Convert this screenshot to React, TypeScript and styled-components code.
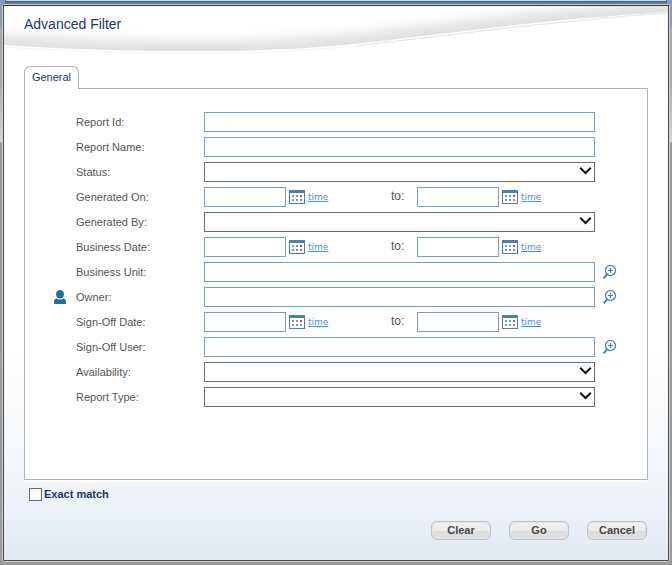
import React from "react";
import styled, { createGlobalStyle } from "styled-components";

const GlobalStyle = createGlobalStyle`
  *, *::before, *::after { box-sizing: border-box; }
  html, body, #root { height: 100%; }
  body {
    margin: 0;
    font-family: "Liberation Sans", Arial, sans-serif;
    font-size: 11px;
    color: #555;
  }
  input, select, button { font: inherit; }
`;

const Backdrop = styled.div`
  min-height: 100%;
  display: flex;
  flex-direction: column;
  padding: 0 2px 3px;
  background:
    linear-gradient(#647a8f, #647a8f) 5px 0 / calc(100% - 10px) 4px no-repeat,
    linear-gradient(#8c9bae 0, #8c9bae 22px, #aaa 30px, #a5a5aa 75px, #d5d5d5 142px, #9c9a99 143px, #9c9a99 100%);
`;

const UnderlyingBar = styled.div`
  height: 2px;
  margin: 0 3px 2px;
  background: #cfdada;
  border: solid #4f6370;
  border-width: 0 1px 1px;
`;

const Dialog = styled.main`
  flex: 1;
  display: flex;
  flex-direction: column;
  border: 1px solid #c9cdd0;
  border-radius: 2px;
`;

const DialogBody = styled.div`
  position: relative;
  flex: 1;
  display: flex;
  flex-direction: column;
  padding: 0 20px 20px;
  border: 1px solid #4b4b50;
  border-top-color: #2d3444;
  background: linear-gradient(#fff 0, #fff 340px, #f2f6fa 470px, #e9eef6 520px, #e2e9f1 100%);
`;

const Swoosh = styled.svg`
  position: absolute;
  top: 0;
  left: 0;
  width: 100%;
  height: 50px;
`;

const Title = styled.h1`
  position: relative;
  margin: 0;
  padding-top: 9px;
  height: 60px;
  font-size: 14px;
  line-height: 18px;
  font-weight: 400;
  color: #1b3768;
`;

const Tab = styled.button`
  position: relative;
  align-self: flex-start;
  width: 55px;
  height: 23px;
  margin-bottom: -1px;
  padding: 0 0 2px;
  border: 1px solid #b1b1b1;
  border-bottom: 0;
  border-radius: 6px 6px 0 0;
  background: #fff;
  color: #1b3768;
  line-height: 20px;
  text-align: center;
`;

const Panel = styled.form`
  flex: 1;
  display: flex;
  flex-direction: column;
  gap: 5px;
  padding: 23px 0;
  border: 1px solid #b1b1b1;
  background: #fff;
  box-shadow: 0 2px #fff;
`;

const Row = styled.div`
  display: grid;
  grid-template-columns: 51px 128px minmax(0, 1fr) 52px;
  align-items: center;
  height: 20px;
`;

const Marker = styled.span`
  display: flex;
  justify-content: flex-end;
  padding-right: 10px;
`;

const Label = styled.label`
  line-height: 20px;
`;

const TextField = styled.input<{ $short?: boolean }>`
  width: ${(p) => (p.$short ? "82px" : "100%")};
  height: 20px;
  padding: 0 4px;
  border: 1px solid #7d9dbb;
  border-radius: 0;
  background: #fff;
  outline: none;
`;

const SelectWrap = styled.span`
  position: relative;
  display: block;
  height: 20px;
`;

const Select = styled.select`
  appearance: none;
  display: block;
  width: 100%;
  height: 20px;
  padding: 0 20px 0 4px;
  border: 1px solid #6d6d6d;
  border-radius: 0;
  background: #fff;
  outline: none;
`;

const Chevron = styled.svg`
  position: absolute;
  top: 4px;
  right: 3px;
  pointer-events: none;
`;

const DateRange = styled.div`
  display: grid;
  grid-template-columns: 187px 26px auto;
  justify-content: start;
  height: 20px;
`;

const DateGroup = styled.span`
  display: flex;
  align-items: center;
`;

const To = styled.span`
  font-size: 12px;
  line-height: 18px;
`;

const IconButton = styled.button`
  display: flex;
  margin: 0;
  padding: 0;
  border: 0;
  background: none;
`;

const CalendarButton = styled(IconButton)`
  padding: 0 3px;
`;

const LookupButton = styled(IconButton)`
  margin-left: 8px;
`;

const TimeLink = styled.a`
  font-family: "DejaVu Sans", Verdana, sans-serif;
  font-size: 9px;
  line-height: 12px;
  color: #4b91e6;
`;

const ExactMatch = styled.label`
  display: flex;
  align-items: center;
  gap: 2px;
  height: 14px;
  margin: 7px 0 0 5px;
  font-weight: 700;
  color: #1b3768;
`;

const Checkbox = styled.input`
  appearance: none;
  width: 13px;
  height: 13px;
  margin: 0;
  border: 1px solid #6d6d6d;
  background: #fff;
  &:checked { box-shadow: inset 0 0 0 3px #fff; background: #1b3768; }
`;

const Actions = styled.div`
  display: flex;
  justify-content: flex-end;
  gap: 18px;
  margin: 20px 1px 0 0;
`;

const ActionButton = styled.button`
  width: 60px;
  height: 19px;
  padding: 0;
  border: 1px solid #bfbfbf;
  border-radius: 6px;
  background: linear-gradient(#f1f1f1 0, #ececec 9px, #dedede 9px, #e2e2e2 100%);
  box-shadow: inset 0 0 0 1px #e3e3e3;
  font-weight: 700;
  line-height: 17px;
  color: #484848;
`;

const CalendarIcon = () => (
  <svg width="16" height="14" viewBox="0 0 16 14" shapeRendering="crispEdges" aria-hidden="true">
    <rect width="16" height="14" fill="#4b81a8" />
    <rect x="1" y="3" width="14" height="10" fill="#fff" />
    <path d="M3 5h2v2H3zM7 5h2v2H7zM3 9h2v2H3zM7 9h2v2H7zM11 9h2v2h-2z" fill="#6f9cba" />
    <path d="M11 5h2v2h-2z" fill="#f23a3a" />
  </svg>
);

const LookupIcon = () => (
  <svg width="14" height="14" viewBox="0 0 14 14" fill="none" stroke="#4581a9" aria-hidden="true">
    <circle cx="7.5" cy="5.5" r="5" strokeWidth="1.2" />
    <path d="M7.5 3v5M5 5.5h5" strokeWidth="1.2" />
    <path d="M4 9.5L.6 13.3" strokeWidth="1.9" />
  </svg>
);

const UserIcon = () => (
  <svg width="12" height="14" viewBox="0 0 12 14" fill="#226d98" aria-label="Current user">
    <ellipse cx="6" cy="4.3" rx="4" ry="4.3" />
    <path d="M2.2 8.6C4.4 9.8 7.6 9.8 9.8 8.6 11.4 9.2 12 10.6 12 12.3V13q0 1-1 1H1q-1 0-1-1v-.7C0 10.6.6 9.2 2.2 8.6Z" />
  </svg>
);

const foldEdge = "M-20 38L0 39C60 43 120 45 190 45C250 45 300 43 350 38C420 30 490 21 540 16C590 11 630 8 664 6L684 5";

const HeaderFold = () => (
  <Swoosh viewBox="0 0 664 50" preserveAspectRatio="none" aria-hidden="true">
    <defs>
      <clipPath id="above-fold">
        <path d={`${foldEdge}V-20H-20Z`} />
      </clipPath>
      <filter id="soften" filterUnits="userSpaceOnUse" x="-20" y="-20" width="704" height="100">
        <feGaussianBlur stdDeviation="6" />
      </filter>
    </defs>
    <g clipPath="url(#above-fold)">
      <path d={foldEdge} fill="none" stroke="#dfdfdf" strokeWidth="20" filter="url(#soften)" />
    </g>
    <path d="M0 41C60 45 120 47 190 47C250 47 300 45 350 40C420 32 490 23 540 18C590 13 630 9 664 7" fill="none" stroke="#f5f5f5" />
    <path d="M350 40C420 32 490 23 540 18C590 13 630 9 664 7" fill="none" stroke="#e6e6e6" />
  </Swoosh>
);

type Kind = "text" | "select" | "date" | "lookup";

const fields: { label: string; kind: Kind; owner?: boolean }[] = [
  { label: "Report Id", kind: "text" },
  { label: "Report Name", kind: "text" },
  { label: "Status", kind: "select" },
  { label: "Generated On", kind: "date" },
  { label: "Generated By", kind: "select" },
  { label: "Business Date", kind: "date" },
  { label: "Business Unit", kind: "lookup" },
  { label: "Owner", kind: "lookup", owner: true },
  { label: "Sign-Off Date", kind: "date" },
  { label: "Sign-Off User", kind: "lookup" },
  { label: "Availability", kind: "select" },
  { label: "Report Type", kind: "select" },
];

function DatePart({ id, name }: { id: string; name: string }) {
  return (
    <DateGroup>
      <TextField $short id={id} aria-label={name} />
      <CalendarButton type="button" aria-label={`Pick ${name}`}>
        <CalendarIcon />
      </CalendarButton>
      <TimeLink href="#time">time</TimeLink>
    </DateGroup>
  );
}

function Control({ id, label, kind }: { id: string; label: string; kind: Kind }) {
  if (kind === "select") {
    return (
      <SelectWrap>
        <Select id={id} defaultValue="">
          <option value="" />
        </Select>
        <Chevron width="13" height="10" viewBox="0 0 13 10" aria-hidden="true">
          <path d="M1.2 1.8L6.5 7L11.8 1.8" fill="none" stroke="#171717" strokeWidth="2" />
        </Chevron>
      </SelectWrap>
    );
  }
  if (kind === "date") {
    return (
      <DateRange>
        <DatePart id={id} name={`${label} from`} />
        <To>to:</To>
        <DatePart id={`${id}-to`} name={`${label} to`} />
      </DateRange>
    );
  }
  return <TextField id={id} />;
}

export default function App() {
  return (
    <Backdrop>
      <GlobalStyle />
      <UnderlyingBar />
      <Dialog>
        <DialogBody>
          <HeaderFold />
          <Title>Advanced Filter</Title>
          <Tab type="button">General</Tab>
          <Panel id="filter">
            {fields.map(({ label, kind, owner }) => {
              const id = label.toLowerCase().replace(/ /g, "-");
              return (
                <Row key={id}>
                  <Marker>{owner && <UserIcon />}</Marker>
                  <Label htmlFor={id}>{label}:</Label>
                  <Control id={id} label={label} kind={kind} />
                  {kind === "lookup" && (
                    <LookupButton type="button" aria-label={`Look up ${label}`}>
                      <LookupIcon />
                    </LookupButton>
                  )}
                </Row>
              );
            })}
          </Panel>
          <ExactMatch>
            <Checkbox type="checkbox" />
            Exact match
          </ExactMatch>
          <Actions>
            <ActionButton type="reset" form="filter">Clear</ActionButton>
            <ActionButton type="submit" form="filter">Go</ActionButton>
            <ActionButton type="button">Cancel</ActionButton>
          </Actions>
        </DialogBody>
      </Dialog>
    </Backdrop>
  );
}
